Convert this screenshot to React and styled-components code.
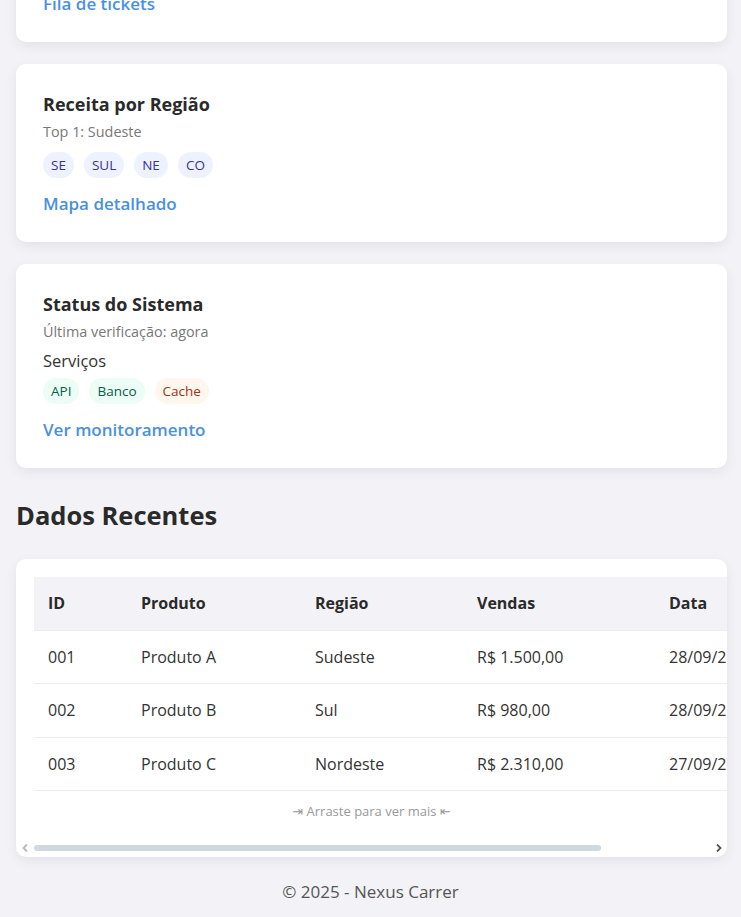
import React from "react";
import styled, { createGlobalStyle } from "styled-components";

const Global = createGlobalStyle`
  * { box-sizing: border-box; }
  html, body { margin: 0; padding: 0; }
  body {
    background: #f3f3f7;
    font-family: "Open Sans", "Noto Sans", "DejaVu Sans", sans-serif;
    color: #333;
  }
`;

const Page = styled.div`
  height: 100vh;
  overflow: hidden;
  display: flex;
  flex-direction: column;
  justify-content: flex-end;
`;

const Main = styled.main`
  padding: 0 14px 0 16px;
  display: flex;
  flex-direction: column;
  gap: 22px;
  flex-shrink: 0;
`;

const Card = styled.section`
  background: #fff;
  border-radius: 10px;
  box-shadow: 0 4px 12px rgba(30, 30, 60, 0.08);
  padding: 28px 27px 26px;
`;

const Title = styled.h3`
  margin: 0;
  font-size: 18px;
  line-height: 25px;
  font-weight: 700;
  color: #2a2a2a;
`;

const Sub = styled.p`
  margin: 5px 0 0;
  font-size: 14.4px;
  line-height: 20px;
  color: #777;
`;

const Label = styled.div`
  margin-top: 7px;
  font-size: 16.5px;
  line-height: 24px;
  color: #333;
`;

const Chips = styled.div`
  display: flex;
  gap: 10px;
  margin-top: ${(p) => (p.$tight ? "5px" : "10px")};
`;

const palette = {
  indigo: { bg: "#eef2ff", fg: "#3730a3" },
  green: { bg: "#ecfdf5", fg: "#065f46" },
  orange: { bg: "#fff7ed", fg: "#9a3412" },
};

const Chip = styled.span`
  display: inline-block;
  padding: 4px 8px;
  border-radius: 999px;
  font-size: 13.5px;
  line-height: 18px;
  background: ${(p) => palette[p.$tone].bg};
  color: ${(p) => palette[p.$tone].fg};
`;

const Link = styled.a`
  display: inline-block;
  margin-top: 14px;
  font-size: 17px;
  line-height: 24px;
  font-weight: 600;
  color: #4a90e2;
  text-decoration: none;
`;

const SectionTitle = styled.h2`
  margin: 10px 0 6px;
  font-size: 25.5px;
  line-height: 31px;
  font-weight: 700;
  color: #2a2a2a;
`;

const TableCard = styled.div`
  background: #fff;
  border-radius: 10px;
  box-shadow: 0 4px 12px rgba(30, 30, 60, 0.08);
  overflow: hidden;
`;

const Scroller = styled.div`
  padding: 18px 18px 14px;
  overflow-x: auto;
  scrollbar-width: none;
  &::-webkit-scrollbar { display: none; }
`;

const Table = styled.table`
  width: 800px;
  border-collapse: collapse;
  font-size: 16px;
`;

const Th = styled.th`
  text-align: left;
  background: #f3f3f7;
  font-weight: 700;
  color: #2a2a2a;
  padding: 16px 14px;
  line-height: 20.5px;
  border-bottom: 1px solid #ececec;
  width: ${(p) => p.$w}px;
`;

const Td = styled.td`
  padding: 16px 14px;
  line-height: 20.5px;
  border-bottom: 1px solid #ececec;
  color: #333;
  white-space: nowrap;
`;

const Hint = styled.div`
  text-align: center;
  font-size: 13px;
  line-height: 17px;
  color: #999;
  padding: 12px 0 8px;
`;

const ScrollTrack = styled.div`
  display: grid;
  grid-template-columns: 18px 1fr 16px;
  height: 15px;
  align-items: start;
  padding-top: 3px;
`;

const Arrow = styled.svg`
  justify-self: center;
  width: 6px;
  height: 8px;
  margin-top: -1px;
  color: ${(p) => (p.$disabled ? "#b8b8b8" : "#555")};
`;

const Rail = styled.div`
  height: 6px;
`;

const Thumb = styled.div`
  height: 6px;
  border-radius: 3px;
  background: #cfd9e1;
`;

const Footer = styled.footer`
  text-align: center;
  font-size: 17px;
  line-height: 24px;
  color: #555;
  padding: 23px 0 13px;
  flex-shrink: 0;
`;

const cols = [
  ["ID", 93],
  ["Produto", 174],
  ["Região", 162],
  ["Vendas", 192],
  ["Data", 179],
];

const rows = [
  ["001", "Produto A", "Sudeste", "R$ 1.500,00", "28/09/2025"],
  ["002", "Produto B", "Sul", "R$ 980,00", "28/09/2025"],
  ["003", "Produto C", "Nordeste", "R$ 2.310,00", "27/09/2025"],
];

export default function App() {
  return (
    <>
      <Global />
      <Page>
        <Main>
          <Card>
            <Title>Suporte</Title>
            <Sub>Tickets abertos: 12</Sub>
            <Chips>
              <Chip $tone="indigo">Alta</Chip>
              <Chip $tone="indigo">Média</Chip>
            </Chips>
            <Link href="#">Fila de tickets</Link>
          </Card>

          <Card>
            <Title>Receita por Região</Title>
            <Sub>Top 1: Sudeste</Sub>
            <Chips>
              <Chip $tone="indigo">SE</Chip>
              <Chip $tone="indigo">SUL</Chip>
              <Chip $tone="indigo">NE</Chip>
              <Chip $tone="indigo">CO</Chip>
            </Chips>
            <Link href="#">Mapa detalhado</Link>
          </Card>

          <Card>
            <Title>Status do Sistema</Title>
            <Sub>Última verificação: agora</Sub>
            <Label>Serviços</Label>
            <Chips $tight>
              <Chip $tone="green">API</Chip>
              <Chip $tone="green">Banco</Chip>
              <Chip $tone="orange">Cache</Chip>
            </Chips>
            <Link href="#">Ver monitoramento</Link>
          </Card>

          <SectionTitle>Dados Recentes</SectionTitle>

          <TableCard>
            <Scroller>
              <Table>
                <thead>
                  <tr>
                    {cols.map(([c, w]) => (
                      <Th key={c} $w={w}>{c}</Th>
                    ))}
                  </tr>
                </thead>
                <tbody>
                  {rows.map((r) => (
                    <tr key={r[0]}>
                      {r.map((v, i) => (
                        <Td key={i}>{v}</Td>
                      ))}
                    </tr>
                  ))}
                </tbody>
              </Table>
              <Hint>⇥ Arraste para ver mais ⇤</Hint>
            </Scroller>
            <ScrollTrack>
              <Arrow $disabled viewBox="0 0 6 8">
                <path d="M5 0.5 L1.5 4 L5 7.5" fill="none" stroke="currentColor" strokeWidth="1.8" />
              </Arrow>
              <Rail>
                <Thumb style={{ width: "83.7%" }} />
              </Rail>
              <Arrow viewBox="0 0 6 8">
                <path d="M1 0.5 L4.5 4 L1 7.5" fill="none" stroke="currentColor" strokeWidth="1.8" />
              </Arrow>
            </ScrollTrack>
          </TableCard>
        </Main>
        <Footer>© 2025 - Nexus Carrer</Footer>
      </Page>
    </>
  );
}
